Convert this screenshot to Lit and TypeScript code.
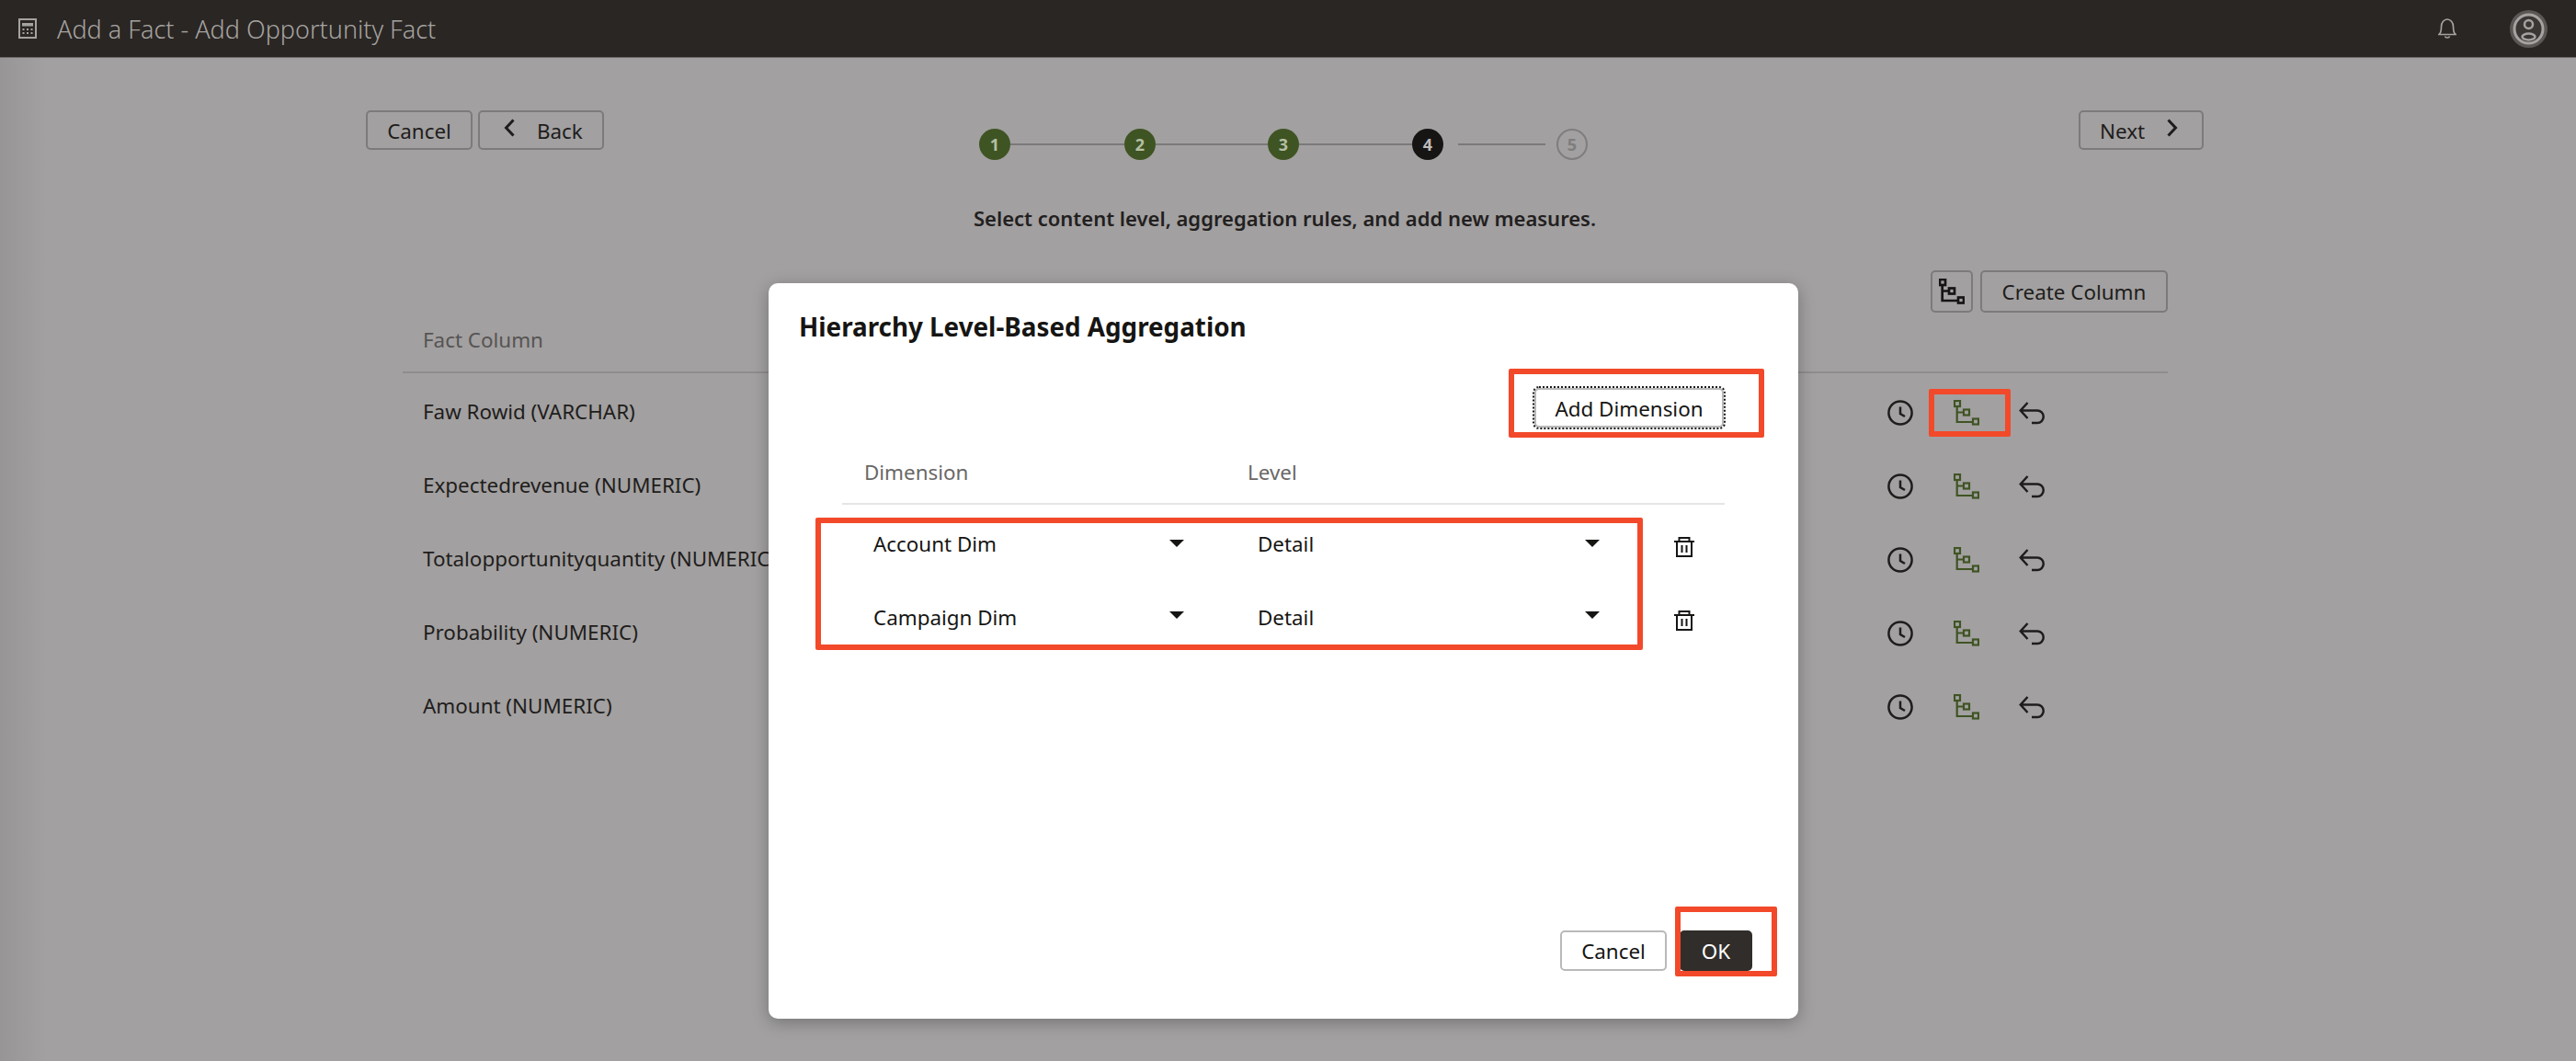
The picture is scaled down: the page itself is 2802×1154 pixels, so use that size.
import { LitElement, html, css } from "lit";
import { customElement } from "lit/decorators.js";

const hier = (cls: string) => html`<svg class="ic28 ${cls}" viewBox="0 0 28 28" fill="none" stroke="currentColor" stroke-width="2.2">
  <rect x="1" y="1" width="6" height="6"/><rect x="11" y="10.5" width="6" height="6"/><rect x="21" y="20.5" width="6" height="6"/>
  <path d="M3.7 7V24H21M3.7 13.5H11"/></svg>`;
const clock = html`<svg class="ic28" viewBox="0 0 28 28" fill="none" stroke="currentColor" stroke-width="2.5"><circle cx="14" cy="14" r="12.6"/><path d="M14 7.5V15L19 18"/></svg>`;
const undo = html`<svg class="ic28" viewBox="0 0 28 28" fill="none" stroke="currentColor" stroke-width="2.5"><path d="M9.5 3L1.8 11.5L9.5 20M1.8 11.5H20A6.7 6.7 0 0 1 20 25H14"/></svg>`;
const trash = html`<svg class="trash" viewBox="0 0 22 22" fill="none" stroke="currentColor" stroke-width="2"><path d="M0 5H22M5.5 5V1H16.5V5M3 5V21H19V5M8.5 9V17M13.5 9V17"/></svg>`;
const caret = (up: boolean) => html`<span class="caret ${up ? "up" : ""}"></span>`;
const chevL = html`<svg class="chev" viewBox="0 0 12 20" fill="none" stroke="currentColor" stroke-width="3"><path d="M10.5 1.5L2.5 10L10.5 18.5"/></svg>`;
const chevR = html`<svg class="chev" viewBox="0 0 12 20" fill="none" stroke="currentColor" stroke-width="3"><path d="M1.5 1.5L9.5 10L1.5 18.5"/></svg>`;

const STEPS = [
  { n: 1, s: "done", line: 124 },
  { n: 2, s: "done", line: 122 },
  { n: 3, s: "done", line: 123 },
  { n: 4, s: "cur", line: 95, gap: true },
  { n: 5, s: "todo", line: 0 },
];
const ROWS = ["Faw Rowid (VARCHAR)", "Expectedrevenue (NUMERIC)", "Totalopportunityquantity (NUMERIC)", "Probability (NUMERIC)", "Amount (NUMERIC)"];
const DIMS = ["Account Dim", "Campaign Dim"];

@customElement("app-root")
export class AppRoot extends LitElement {
  static styles = css`
    :host { display: block; position: relative; width: 2802px; height: 1154px; overflow: hidden;
      font-family: "Noto Sans", "Open Sans", sans-serif; font-size: 22.4px; color: #1f1d1c; background: #a19f9f; }
    * { box-sizing: border-box; }
    button { font: inherit; color: inherit; background: transparent; }
    .bar { height: 63px; background: #2a2623; border-bottom: 1px solid #6e6b69; display: flex; align-items: center; color: #a5a3a1; padding-left: 20px; }
    .title { margin-left: 22px; font-size: 27px; font-weight: 300; line-height: 36px; white-space: nowrap; padding-top: 1px; }
    .bar-end { margin-left: auto; display: flex; align-items: center; gap: 58px; padding-right: 31px; }
    .main { height: 1091px; background: linear-gradient(90deg, #979595 0, #a2a0a0 50px); padding: 57px 405px 0 398px; }
    .top { display: grid; grid-template-columns: 1fr auto 1fr; align-items: start; }
    .group { display: flex; gap: 6px; }
    .group.end { justify-content: flex-end; }
    .btn { height: 43px; border: 2px solid #7c7a7a; border-radius: 5px; padding: 3px 0 0; display: flex; align-items: center; justify-content: center; white-space: nowrap; line-height: 1; }
    .btn.cancel { width: 116px; }
    .btn.back { width: 137px; justify-content: flex-start; padding-left: 26px; gap: 24px; }
    .btn.next { width: 136px; justify-content: flex-start; padding-left: 21px; gap: 24px; }
    .chev { width: 12px; height: 20px; margin-top: -9px; flex: none; }
    .stepper { display: flex; align-items: center; margin-top: 20px; padding-right: 3px; }
    .dot { width: 34px; height: 34px; border-radius: 50%; display: flex; align-items: center; justify-content: center; font-size: 18px; font-weight: 700; flex: none; }
    .dot.done { background: #3f5423; color: #b4bfa4; }
    .dot.cur { background: #161514; color: #bdbbbb; }
    .dot.todo { border: 2px solid #7f7d7d; color: #7f7d7d; }
    .line { height: 2px; background: #7b7979; flex: none; }
    .line.gap { margin: 0 12px 0 16px; }
    .sub { margin-top: 47px; height: 32px; line-height: 32px; text-align: center; font-weight: 600; font-size: 22px; color: #22201f; }
    .table { margin: 41px 39px 0 40px; }
    .tools { display: flex; justify-content: flex-end; gap: 8px; }
    .tools .btn { height: 46px; }
    .icon-btn { width: 46px; padding: 0; }
    .create { width: 204px; }
    .thead { height: 66px; border-bottom: 2px solid #8e8c8c; padding: 12px 0 0 22px; line-height: 36px; color: #565454; }
    .row { height: 80px; display: flex; align-items: center; padding-left: 22px; }
    .name { white-space: nowrap; margin-top: 3px; }
    .acts { margin-left: auto; margin-right: 134px; display: flex; gap: 43.5px; margin-top: 5px; }
    .ic28 { width: 28px; height: 28px; display: block; flex: none; }
    .green { color: #3f5423; }
    .dark { color: #161514; }
    .dark .ic28 { stroke-width: 2.7; }

    .modal { position: absolute; left: 836px; top: 308px; width: 1120px; height: 800px; background: #fff; border-radius: 10px;
      box-shadow: 0 4px 18px rgba(0,0,0,.28); display: flex; flex-direction: column; padding: 29px 50px 52px 33px; color: #161513; }
    .m-title { font-size: 27.8px; font-weight: 700; line-height: 36px; }
    .m-tools { margin-top: 49px; display: flex; justify-content: flex-end; padding-right: 31px; }
    .add { outline: 2px dotted #1a1a1a; border-color: #b9b9b9; width: 206px; }
    .m-table { margin-left: 47px; margin-right: 30px; }
    .m-head { height: 84px; margin-bottom: 3px; border-bottom: 2px solid #e5e5e5; display: grid; grid-template-columns: 441px 1fr; align-items: center; color: #6a6866; padding: 14px 0 0 24px; }
    .m-head span:last-child { margin-left: -24px; }
    .m-row { height: 80px; display: grid; grid-template-columns: 441px 384px auto; align-items: center; margin-left: -1px; }
    .sel { display: flex; align-items: center; justify-content: space-between; line-height: 36px; }
    .sel.a { padding-left: 35px; width: 373px; }
    .sel.b { padding-left: 12px; }
    .caret { width: 0; height: 0; border-left: 8.5px solid transparent; border-right: 8.5px solid transparent; border-top: 8.5px solid #161513; margin-top: -2px; }
    .caret.up { margin-top: -6px; }
    .trash { width: 22px; height: 22px; margin: 6px 0 0 81px; display: block; }
    .m-foot { margin-top: auto; display: flex; justify-content: flex-end; gap: 14px; }
    .m-foot .btn { height: 44px; }
    .m-cancel { border-color: #b9b9b9; width: 116px; }
    .ok { width: 79px; background: #312d2a; border-color: #312d2a; color: #fff; }

    .mark { position: absolute; border: 6px solid #f2492a; border-radius: 2px; pointer-events: none; }
    .m1 { left: 2098px; top: 423px; width: 89px; height: 52px; }
    .m2 { left: 1641px; top: 401px; width: 278px; height: 75px; }
    .m3 { left: 887px; top: 563px; width: 900px; height: 144px; }
    .m4 { left: 1822px; top: 986px; width: 111px; height: 76px; }
  `;

  render() {
    return html`
      <div class="bar">
        <svg width="20" height="22" viewBox="0 0 20 22" fill="none" stroke="currentColor" stroke-width="2">
          <rect x="1" y="1" width="18" height="20"/>
          <rect x="4" y="5" width="12" height="3.5" fill="currentColor" stroke="none"/>
          <path d="M4.5 12h2m2.5 0h2m2.5 0h2M4.5 16h2m2.5 0h2m2.5 0h2" stroke-width="2"/>
        </svg>
        <div class="title">Add a Fact - Add Opportunity Fact</div>
        <div class="bar-end">
          <svg width="20" height="22" viewBox="0 0 20 22" fill="none" stroke="currentColor" stroke-width="1.7">
            <path d="M1 17.5C3 16 3.5 14 3.5 9C3.5 4.5 6.5 1 10 1C13.5 1 16.5 4.5 16.5 9C16.5 14 17 16 19 17.5Z"/>
            <path d="M7.5 19.5C8 21.5 12 21.5 12.5 19.5"/>
          </svg>
          <svg width="41" height="41" viewBox="0 0 41 41">
            <circle cx="20.5" cy="20.5" r="20.5" fill="#5a5755"/>
            <circle cx="20.5" cy="20.5" r="15.5" fill="#3a3634" stroke="#a5a3a1" stroke-width="3"/>
            <circle cx="20.5" cy="15.5" r="4.5" fill="none" stroke="#a5a3a1" stroke-width="2.5"/>
            <ellipse cx="20.5" cy="29" rx="7" ry="3.5" fill="none" stroke="#a5a3a1" stroke-width="2.5"/>
          </svg>
        </div>
      </div>
      <div class="main">
        <div class="top">
          <div class="group">
            <button class="btn cancel">Cancel</button>
            <button class="btn back">${chevL}<span>Back</span></button>
          </div>
          <div class="stepper">
            ${STEPS.map(s => html`<div class="dot ${s.s}">${s.n}</div>${s.line
              ? html`<div class="line ${s.gap ? "gap" : ""}" style="width:${s.line}px"></div>` : ""}`)}
          </div>
          <div class="group end">
            <button class="btn next"><span>Next</span>${chevR}</button>
          </div>
        </div>
        <div class="sub">Select content level, aggregation rules, and add new measures.</div>
        <div class="table">
          <div class="tools">
            <button class="btn icon-btn dark">${hier("")}</button>
            <button class="btn create">Create Column</button>
          </div>
          <div class="thead">Fact Column</div>
          ${ROWS.map(r => html`<div class="row"><span class="name">${r}</span>
            <div class="acts">${clock}${hier("green")}${undo}</div></div>`)}
        </div>
      </div>
      <div class="modal">
        <div class="m-title">Hierarchy Level-Based Aggregation</div>
        <div class="m-tools"><button class="btn add">Add Dimension</button></div>
        <div class="m-table">
          <div class="m-head"><span>Dimension</span><span>Level</span></div>
          ${DIMS.map((d, i) => html`<div class="m-row">
            <div class="sel a"><span>${d}</span>${caret(i === 1)}</div>
            <div class="sel b"><span>Detail</span>${caret(i === 1)}</div>
            ${trash}
          </div>`)}
        </div>
        <div class="m-foot">
          <button class="btn m-cancel">Cancel</button>
          <button class="btn ok">OK</button>
        </div>
      </div>
      <div class="mark m1"></div><div class="mark m2"></div><div class="mark m3"></div><div class="mark m4"></div>
    `;
  }
}
